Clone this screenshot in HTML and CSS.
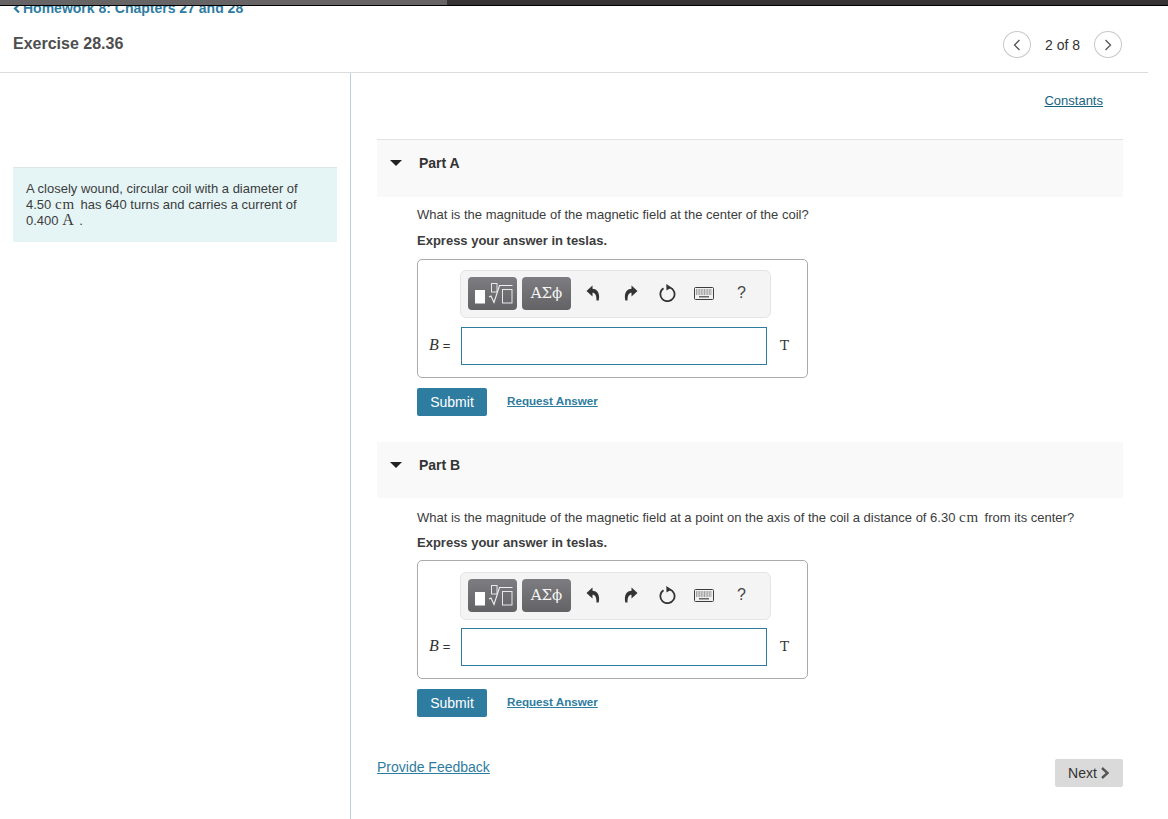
FILE: index.html
```html
<!DOCTYPE html>
<html lang="en">
<head>
<meta charset="utf-8">
<title>Exercise 28.36</title>
<link rel="stylesheet" href="styles.css">
</head>
<body>
<svg class="defs" width="0" height="0" aria-hidden="true">
  <defs>
    <symbol id="tpl" viewBox="0 0 49 33">
      <rect x="7" y="13" width="10" height="13.500" fill="#fff"/>
      <rect x="23.500" y="6.500" width="5.500" height="8.500" fill="none" stroke="#e8e8e8" stroke-width="1"/>
      <path d="M21 20 L23 19 L26 25.500 L31.500 8.500 H44.500" fill="none" stroke="#f0f0f0" stroke-width="1.100"/>
      <rect x="34.500" y="12.500" width="9.500" height="13.500" fill="none" stroke="#e8e8e8" stroke-width="1"/>
    </symbol>
    <symbol id="undo" viewBox="0 0 14 16">
      <path d="M6.500 0.500 L0.500 6 L6.500 11.500 V7.800 C9 7.800 10.500 9.800 10.500 15.500 L12.700 15.500 C14.300 8 11 3.800 6.500 3.800 Z" fill="#333"/>
    </symbol>
    <symbol id="redo" viewBox="0 0 14 16">
      <path d="M7.500 0.500 L13.500 6 L7.500 11.500 V7.800 C5 7.800 3.500 9.800 3.500 15.500 L1.300 15.500 C-0.300 8 3 3.800 7.500 3.800 Z" fill="#333"/>
    </symbol>
    <symbol id="reset" viewBox="0 0 18 18">
      <path d="M5.500 4.200 A7.100 7.100 0 1 0 11.500 3.300" fill="none" stroke="#333" stroke-width="1.800"/>
      <path d="M8.300 0 L13.500 3.400 L8.500 6.600 Z" fill="#333"/>
    </symbol>
    <symbol id="keys" viewBox="0 0 20 13">
      <rect x="0.500" y="0.500" width="19" height="12" rx="1" fill="#f0f0f0" stroke="#3c3c3c"/>
      <path d="M2 3 H18 M2 5 H18 M2 7 H18" stroke="#555" stroke-width="1" stroke-dasharray="1 .6"/>
      <path d="M5 9.800 H15" stroke="#444" stroke-width="1.200"/>
    </symbol>
  </defs>
</svg>

<div class="topbar"><div class="topbar-a"></div><div class="topbar-b"></div></div>

<div class="crumb-clip">
  <a class="crumb" href="#"><svg class="crumb-icon" width="7" height="9" viewBox="0 0 7 9"><path d="M6 .5 L2 4.500 L6 8.500" fill="none" stroke="#2e7ca0" stroke-width="2.200"/></svg>Homework 8: Chapters 27 and 28</a>
</div>

<header class="head">
  <h1 class="title">Exercise 28.36</h1>
  <nav class="pager">
    <a class="circle" href="#"><svg width="8" height="12" viewBox="0 0 8 12"><path d="M6.500 1 L1.500 6 L6.500 11" fill="none" stroke="#555" stroke-width="1.300"/></svg></a>
    <span class="count">2 of 8</span>
    <a class="circle" href="#"><svg width="8" height="12" viewBox="0 0 8 12"><path d="M1.500 1 L6.500 6 L1.500 11" fill="none" stroke="#555" stroke-width="1.300"/></svg></a>
  </nav>
</header>

<div class="columns">
  <aside class="left">
    <div class="problem">A closely wound, circular coil with a diameter of <br><span class="math">4.50 <span class="tex">cm</span></span> has 640 turns and carries a current of <br><span class="math">0.400 <span class="tex big">A</span></span> .</div>
  </aside>

  <main class="right">
    <div class="constants"><a href="#">Constants</a></div>

    <section class="part part-a">
      <div class="part-head"><span class="caret"></span><span class="part-name">Part A</span></div>
      <div class="part-body">
        <p class="question">What is the magnitude of the magnetic field at the center of the coil?</p>
        <p class="express">Express your answer in teslas.</p>
        <div class="answer">
          <div class="toolbar">
            <span class="tool-btn"><svg width="49" height="33"><use href="#tpl"/></svg></span>
            <span class="tool-btn greek">ΑΣϕ</span>
            <svg class="ico i-undo" width="14" height="16"><use href="#undo"/></svg>
            <svg class="ico i-redo" width="14" height="16"><use href="#redo"/></svg>
            <svg class="ico i-reset" width="18" height="18"><use href="#reset"/></svg>
            <svg class="ico i-keys" width="20" height="13"><use href="#keys"/></svg>
            <span class="help">?</span>
          </div>
          <div class="answer-row">
            <span class="label"><i>B</i> <small>=</small></span>
            <input class="field" type="text" aria-label="B">
            <span class="unit">T</span>
          </div>
        </div>
        <div class="actions"><button class="submit" type="button">Submit</button><a class="request" href="#">Request Answer</a></div>
      </div>
    </section>

    <section class="part part-b">
      <div class="part-head"><span class="caret"></span><span class="part-name">Part B</span></div>
      <div class="part-body">
        <p class="question">What is the magnitude of the magnetic field at a point on the axis of the coil a distance of 6.30 <span class="tex">cm</span> from its center?</p>
        <p class="express">Express your answer in teslas.</p>
        <div class="answer">
          <div class="toolbar">
            <span class="tool-btn"><svg width="49" height="33"><use href="#tpl"/></svg></span>
            <span class="tool-btn greek">ΑΣϕ</span>
            <svg class="ico i-undo" width="14" height="16"><use href="#undo"/></svg>
            <svg class="ico i-redo" width="14" height="16"><use href="#redo"/></svg>
            <svg class="ico i-reset" width="18" height="18"><use href="#reset"/></svg>
            <svg class="ico i-keys" width="20" height="13"><use href="#keys"/></svg>
            <span class="help">?</span>
          </div>
          <div class="answer-row">
            <span class="label"><i>B</i> <small>=</small></span>
            <input class="field" type="text" aria-label="B">
            <span class="unit">T</span>
          </div>
        </div>
        <div class="actions"><button class="submit" type="button">Submit</button><a class="request" href="#">Request Answer</a></div>
      </div>
    </section>

    <footer class="foot">
      <a class="feedback" href="#">Provide Feedback</a>
      <a class="next" href="#">Next<svg width="10" height="12" viewBox="0 0 10 12"><path d="M2 1 L7.500 6 L2 11" fill="none" stroke="#555" stroke-width="2.400"/></svg></a>
    </footer>
  </main>
</div>
</body>
</html>
```
FILE: styles.css
```css
* { box-sizing: border-box; }
html, body { height: 100%; }
body {
  margin: 0;
  height: 819px;
  overflow: hidden;
  background: #fff;
  color: #333;
  font-family: "Liberation Sans", Arial, sans-serif;
  font-size: 13px;
  display: flex;
  flex-direction: column;
}
a { color: #17637f; }
.defs { position: absolute; }

.topbar { height: 6px; flex: none; display: flex; border-bottom: 1px solid #000; }
.topbar-a { width: 447px; background: #666464; }
.topbar-b { flex: 1; background: #353333; }

.crumb-clip { height: 10px; flex: none; overflow: hidden; padding-left: 13px; }
.crumb {
  display: flex; align-items: center; gap: 3px;
  margin-top: -6px;
  height: 16px;
  color: #2e7ca0;
  font-size: 14px;
  font-weight: 700;
  text-decoration: none;
  white-space: nowrap;
}

.head {
  flex: none;
  width: 1148px;
  height: 57px;
  border-bottom: 1px solid #dcdcdc;
  display: flex;
  align-items: flex-start;
  justify-content: space-between;
  padding: 0 26px 0 13px;
}
.title { margin: 18px 0 0; font-size: 16px; line-height: 20px; font-weight: 700; color: #4e4e4e; }
.pager { display: flex; align-items: center; margin-top: 15px; color: #333; }
.count { width: 63px; text-align: center; font-size: 14px; }
.circle {
  width: 28px; height: 27px;
  border: 1px solid #c8c8c8;
  border-radius: 50%;
  display: flex; align-items: center; justify-content: center;
}

.columns { flex: 1; display: flex; min-height: 0; }
.left { width: 351px; flex: none; border-right: 1px solid #b9cfe2; padding: 94px 13px 0; }
.problem {
  height: 75px;
  background: #e5f5f6;
  border-top: 1px solid #dde6e6;
  padding: 13px 13px 0;
  font-size: 13px;
  line-height: 16px;
  color: #3c3c3c;
}
.tex { font-family: "Liberation Serif", serif; font-size: 15px; letter-spacing: .8px; margin-right: 2px; line-height: 1; }
.tex.big { font-size: 16px; letter-spacing: 0; line-height: 0; }

.right { flex: 1; padding: 0 45px 0 26px; min-width: 0; }
.constants { height: 66px; padding: 20px 20px 0 0; text-align: right; font-size: 13px; line-height: 16px; }

.part-head {
  height: 58px;
  background: #f9f9f9;
  display: flex;
  align-items: flex-start;
  padding: 15px 0 0 13px;
  font-size: 14px;
  line-height: 16px;
  font-weight: 700;
  color: #333;
}
.part-a .part-head { border-top: 1px solid #e2e2e2; }
.part-b .part-head { height: 56px; }
.part-b { margin-top: 26px; }
.caret {
  width: 0; height: 0;
  margin: 5px 17px 0 0;
  border-left: 6px solid transparent;
  border-right: 6px solid transparent;
  border-top: 6px solid #222;
}
.part-body { padding-left: 40px; }
.question { margin: 10px 0 0; font-size: 13px; line-height: 16px; color: #3c3c3c; white-space: nowrap; }
.part-b .question { margin-top: 12px; }
.express { margin: 10px 0 0; font-size: 13px; line-height: 16px; font-weight: 700; color: #3c3c3c; }
.part-b .express { margin-top: 9px; }

.answer {
  width: 391px; height: 119px;
  margin-top: 10px;
  border: 1px solid #aaa;
  border-radius: 5px;
  padding: 10px 0 0 42px;
}
.part-b .answer { margin-top: 9px; padding-top: 11px; }
.toolbar {
  width: 311px; height: 48px;
  background: #f4f4f4;
  border: 1px solid #e4e4e4;
  border-radius: 6px;
  display: flex;
  align-items: center;
  padding: 0 0 2px 7px;
}
.tool-btn {
  width: 49px; height: 33px;
  margin-right: 5px;
  border-radius: 4px;
  background: linear-gradient(#7d7c80, #636265);
  display: flex; align-items: center; justify-content: center;
}
.tool-btn:nth-child(2) { margin-right: 0; }
.greek { color: #f4f4f4; font-family: "DejaVu Serif", serif; font-size: 15px; }
.ico { flex: none; }
.i-undo { margin-left: 15px; }
.i-redo { margin-left: 24px; }
.i-reset { margin-left: 20px; }
.i-keys { margin-left: 18px; }
.help { margin-left: 23px; font-size: 16px; color: #444; }

.answer-row { display: flex; align-items: center; margin-top: 9px; margin-left: -31px; }
.part-b .answer-row { margin-top: 8px; }
.label { width: 32px; padding-bottom: 3px; font-family: "Liberation Serif", serif; font-size: 16px; color: #333; white-space: nowrap; }
.label small { font-size: 13px; font-family: "Liberation Sans", sans-serif; }
.field { width: 306px; height: 38px; border: 1px solid #2e7ca0; margin: 0; padding: 0; background: #fff; outline: 0; }
.unit { margin-left: 13px; padding-bottom: 3px; font-family: "DejaVu Serif", serif; font-size: 13.500px; color: #333; }

.actions { display: flex; align-items: center; margin-top: 10px; }
.submit {
  width: 70px; height: 28px;
  border: 0; border-radius: 2px;
  background: #2e7ca0;
  color: #fff;
  font-family: inherit;
  font-size: 14px;
  padding: 0;
}
.request { margin-left: 20px; margin-top: -4px; font-size: 11.650px; font-weight: 700; color: #2e7ca0; }

.foot { display: flex; justify-content: space-between; align-items: flex-start; margin-top: 42px; }
.feedback { font-size: 14px; line-height: 16px; color: #2e7ca0; }
.next {
  width: 68px; height: 28px;
  background: #dadada;
  border-radius: 2px;
  color: #333;
  font-size: 14px;
  text-decoration: none;
  display: flex; align-items: center; justify-content: center; gap: 3px;
}
```
